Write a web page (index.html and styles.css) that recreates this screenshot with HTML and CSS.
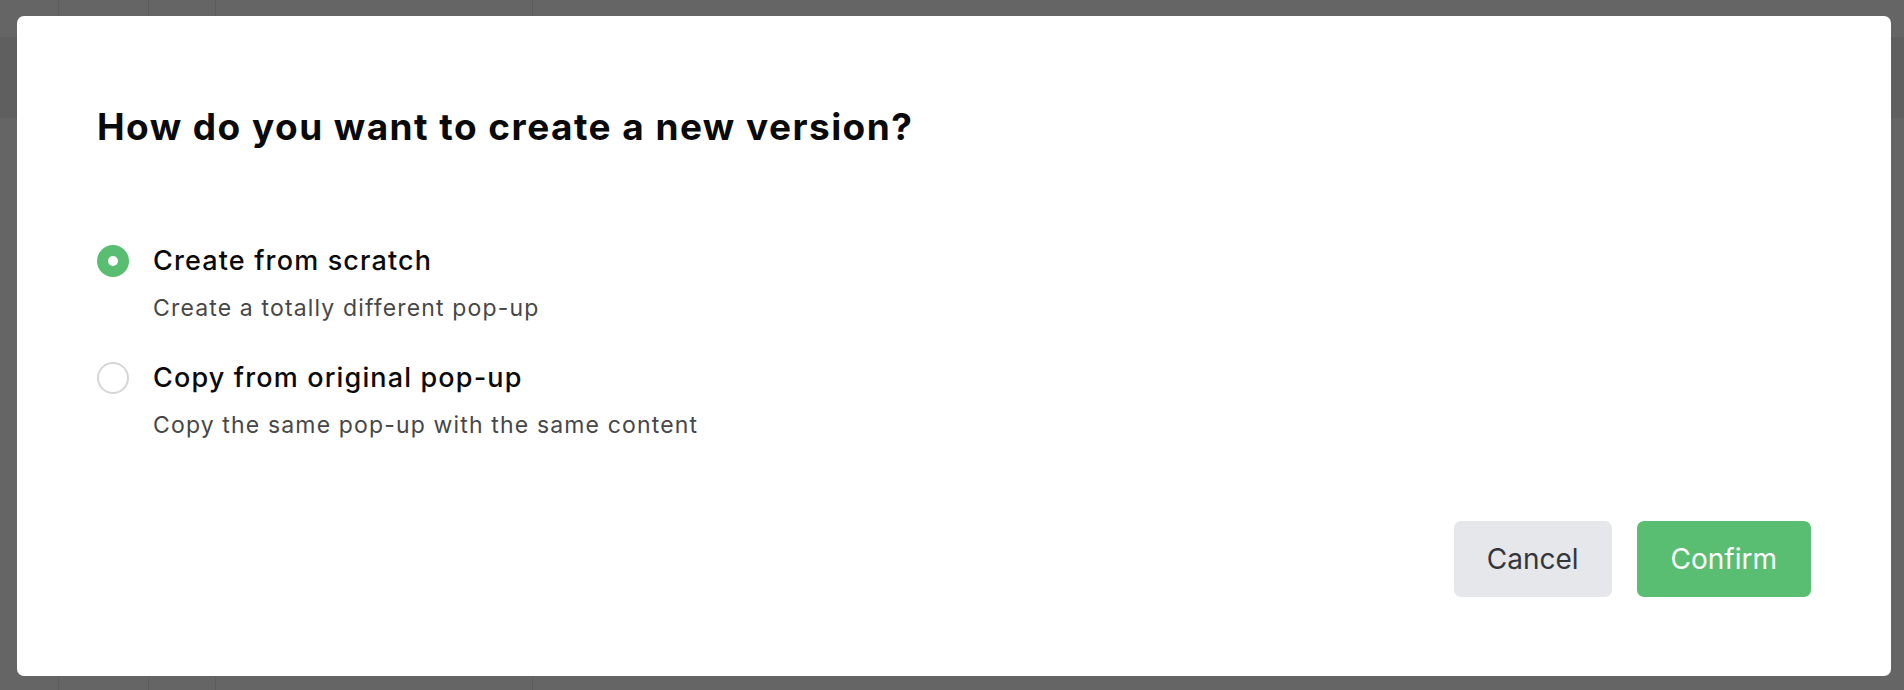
FILE: index.html
```html
<!DOCTYPE html>
<html lang="en">
<head>
<meta charset="utf-8">
<title>New version</title>
<link rel="stylesheet" href="styles.css">
</head>
<body>
<div class="backdrop">
  <div class="modal">
    <h1 class="modal-title">How do you want to create a new version?</h1>
    <div class="options">
      <label class="option">
        <div class="option-head">
          <span class="radio radio-checked"></span>
          <span class="option-title">Create from scratch</span>
        </div>
        <div class="option-desc">Create a totally different pop-up</div>
      </label>
      <label class="option">
        <div class="option-head">
          <span class="radio"></span>
          <span class="option-title">Copy from original pop-up</span>
        </div>
        <div class="option-desc">Copy the same pop-up with the same content</div>
      </label>
    </div>
    <div class="actions">
      <button class="btn btn-cancel">Cancel</button>
      <button class="btn btn-confirm">Confirm</button>
    </div>
  </div>
</div>
</body>
</html>
```

FILE: styles.css
```css
* { box-sizing: border-box; }

html, body {
  margin: 0;
  padding: 0;
  width: 1904px;
  height: 690px;
  overflow: hidden;
}

body {
  font-family: Inter, "Noto Sans", "Liberation Sans", sans-serif;
  background-color: #656565;
  background-image:
    linear-gradient(to right, transparent 58px, #5c5c5c 58px, #5c5c5c 59px, transparent 59px),
    linear-gradient(to right, transparent 148px, #5c5c5c 148px, #5c5c5c 149px, transparent 149px),
    linear-gradient(to right, transparent 215px, #5c5c5c 215px, #5c5c5c 216px, transparent 216px),
    linear-gradient(to right, transparent 532px, #5c5c5c 532px, #5c5c5c 533px, transparent 533px),
    linear-gradient(to bottom, transparent 37px, #5f5f5f 37px, #5f5f5f 118px, transparent 118px);
  background-size: 100% 100%, 100% 100%, 100% 100%, 100% 100%, 100% 100%;
  background-repeat: no-repeat;
}

.backdrop {
  width: 1904px;
  height: 690px;
  padding: 16px 13px 14px 17px;
  display: flex;
}

.modal {
  flex: 1;
  background: #ffffff;
  border-radius: 7px;
  padding: 89px 80px 79px 80px;
  display: flex;
  flex-direction: column;
}

.modal-title {
  margin: 0;
  font-size: 37px;
  line-height: 44px;
  font-weight: 700;
  color: #0a0a0a;
  letter-spacing: 1.45px;
}

.options {
  margin-top: 96px;
  display: flex;
  flex-direction: column;
  gap: 40px;
}

.option {
  display: flex;
  flex-direction: column;
  gap: 17px;
}

.option-head {
  display: flex;
  align-items: center;
  gap: 24px;
}

.radio {
  width: 32px;
  height: 32px;
  border-radius: 50%;
  border: 2px solid #d6d6d6;
  flex: none;
  display: flex;
  align-items: center;
  justify-content: center;
}

.radio-checked {
  border: none;
  background: #5abe72;
}

.radio-checked::after {
  content: "";
  width: 10px;
  height: 10px;
  border-radius: 50%;
  background: #ffffff;
}

.option-title {
  font-size: 27px;
  line-height: 32px;
  font-weight: 500;
  color: #0a0a0a;
  letter-spacing: 1.15px;
}

.option-desc {
  margin-left: 56px;
  font-size: 23px;
  line-height: 28px;
  font-weight: 400;
  color: #474747;
  letter-spacing: 1.15px;
}

.actions {
  margin-top: auto;
  display: flex;
  justify-content: flex-end;
  gap: 25px;
}

.btn {
  height: 76px;
  border: none;
  border-radius: 7px;
  padding: 0 33px;
  font-family: Inter, "Noto Sans", "Liberation Sans", sans-serif;
  font-size: 28px;
  font-weight: 400;
}

.btn-cancel {
  background: #e5e7eb;
  color: #35363a;
}

.btn-confirm {
  background: #5abe72;
  color: #ffffff;
  padding: 0 34px;
}
```
